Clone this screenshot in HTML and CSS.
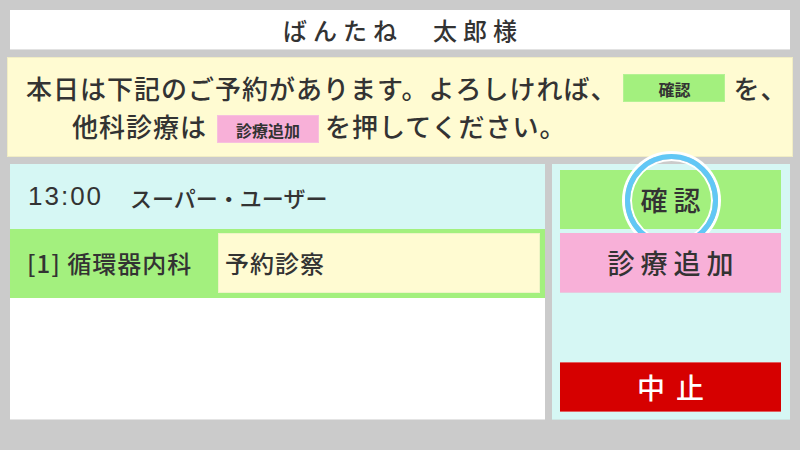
FILE: index.html
```html
<!DOCTYPE html>
<html lang="ja">
<head>
  <meta charset="UTF-8" />
  <meta name="viewport" content="width=device-width, initial-scale=1.0" />
  <title>受付 - 予約確認</title>
  <link rel="stylesheet" href="styles.css">
</head>
<body>

  <div class="screen">
    <header class="patient">ばんたね　太郎様</header>

    <div class="notice">
      <p class="line">本日は下記のご予約があります。よろしければ、<span class="tag tag-ok">確認</span>を、</p>
      <p class="line line-sub">他科診療は<span class="tag tag-add">診療追加</span>を押してください。</p>
    </div>

    <main class="panels">
      <section class="reserve">
        <div class="reserve-head">
          <span class="time">13:00</span>
          <span class="user">スーパー・ユーザー</span>
        </div>
        <div class="reserve-row">
          <div class="dept">[1] 循環器内科</div>
          <div class="kind">予約診察</div>
        </div>
      </section>

      <aside class="actions">
        <button class="btn btn-ok">確認<span class="ring"></span></button>
        <button class="btn btn-add">診療追加</button>
        <button class="btn btn-stop">中止</button>
      </aside>
    </main>
  </div>

</body>
</html>
```

FILE: styles.css
```css
body {
  margin: 0;
  background-color: #cbcbcb;
  font-family: "Noto Sans CJK JP", "Noto Sans", sans-serif;
  font-weight: 500;
  color: #333;
}
.screen {
  width: 800px;
  height: 450px;
  padding: 10px 10px 0;
  box-sizing: border-box;
}
.patient {
  height: 40px;
  background-color: white;
  border-bottom: 1px solid #e2e2e2;
  box-sizing: border-box;
  text-align: center;
  font-size: 24px;
  line-height: 40px;
  letter-spacing: 6px;
  padding-left: 6px;
}
.notice {
  margin: 7px -3px 0;
  height: 100px;
  box-sizing: border-box;
  padding: 11px 0 0 18px;
  background-color: #fffbd2;
  border: 1px solid #f1edc4;
}
.line {
  margin: 0;
  font-size: 26px;
  line-height: 38px;
  letter-spacing: 1px;
  white-space: nowrap;
}
.line-sub {
  padding-left: 46px;
}
.tag {
  display: inline-block;
  width: 102px;
  height: 28px;
  line-height: 28px;
  text-align: center;
  font-size: 16px;
  font-weight: bold;
  letter-spacing: 0;
  box-sizing: border-box;
}
.tag-ok {
  margin: 0 8px 0 6px;
  background-color: #a3f07e;
  border: 1px solid #b4f293;
  vertical-align: 3px;
}
.tag-add {
  margin: 0 6px 0 10px;
  background-color: #f8b0d8;
  border: 1px solid #f6c0de;
  vertical-align: 0;
}
.panels {
  display: flex;
  gap: 7px;
  margin-top: 7px;
  height: 256px;
}
.reserve {
  width: 535px;
  background-color: white;
  border-bottom: 1px solid #e4e4e4;
  box-sizing: border-box;
}
.reserve-head {
  height: 65px;
  display: flex;
  align-items: center;
  padding-left: 18px;
  background-color: #d6f7f4;
}
.time {
  font-family: "Liberation Sans", "Noto Sans CJK JP", sans-serif;
  font-size: 26px;
  letter-spacing: 2px;
  margin-right: 27px;
}
.user {
  font-size: 22px;
}
.reserve-row {
  height: 69px;
  display: flex;
  background-color: #a3f07e;
  padding: 4px 5px 5px 0;
  box-sizing: border-box;
}
.dept {
  width: 208px;
  padding-left: 17px;
  box-sizing: border-box;
  font-size: 24px;
  line-height: 60px;
  letter-spacing: 1px;
  white-space: nowrap;
}
.kind {
  flex: 1;
  background-color: #fffbd2;
  border: 1px solid #eef4c6;
  padding-left: 6px;
  font-size: 24px;
  line-height: 58px;
  letter-spacing: 1px;
}
.actions {
  flex: 1;
  display: flex;
  flex-direction: column;
  gap: 4px;
  padding: 6px 9px 7px 8px;
  background-color: #d6f7f4;
  border-bottom: 1px solid #cfe5e3;
  box-sizing: border-box;
}
.btn {
  position: relative;
  border: none;
  padding: 0 0 0 6px;
  font-family: inherit;
  font-weight: 500;
  color: #333;
  font-size: 27px;
  letter-spacing: 6px;
}
.btn-ok {
  height: 59px;
  background-color: #a3f07e;
}
.btn-add {
  height: 60px;
  background-color: #f8b0d8;
  border-bottom: 1px solid #e8c8de;
}
.btn-stop {
  height: 50px;
  margin-top: auto;
  background-color: #d60000;
  border-top: 1px solid #e06060;
  border-bottom: 1px solid #e06060;
  color: white;
  font-size: 28px;
  letter-spacing: 11px;
  padding-left: 11px;
}
.ring {
  position: absolute;
  left: 65px;
  top: -16px;
  width: 93px;
  height: 93px;
  box-sizing: border-box;
  border: 5px solid #62c7f6;
  border-radius: 50%;
  box-shadow: 0 0 0 3px white, inset 0 0 0 2px white;
}
```
